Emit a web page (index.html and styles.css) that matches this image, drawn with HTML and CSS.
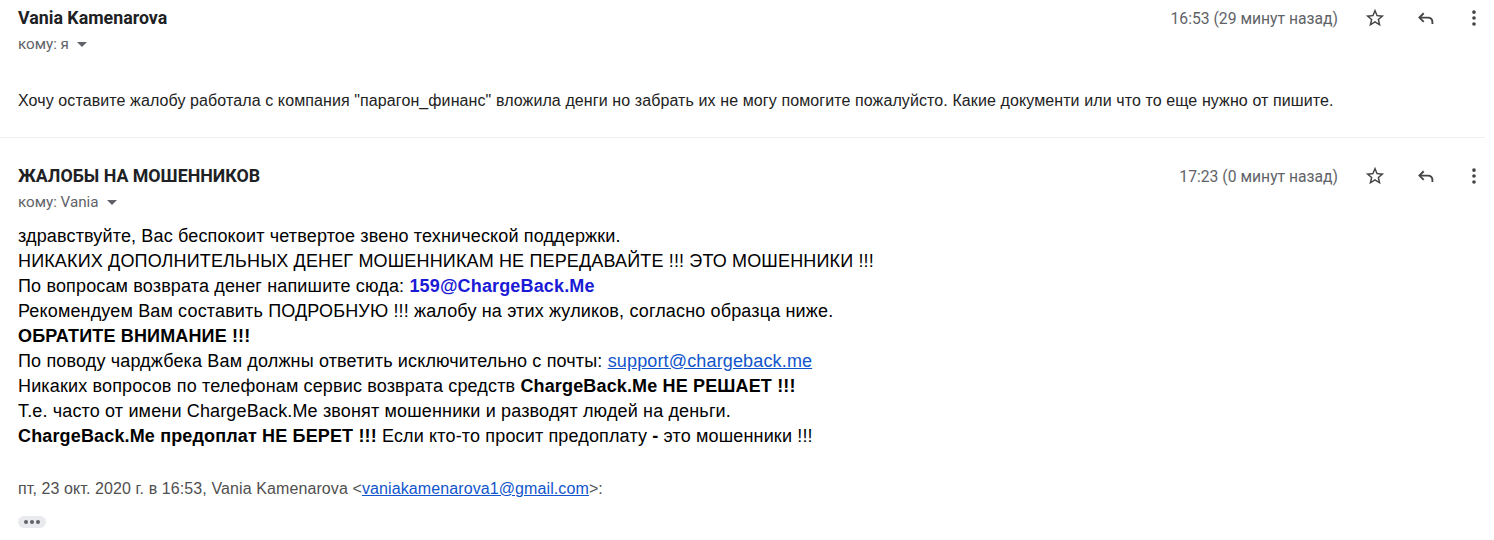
FILE: index.html
```html
<!DOCTYPE html>
<html lang="ru">
<head>
<meta charset="utf-8">
<link rel="stylesheet" href="styles.css">
</head>
<body>
<div class="thread">
  <div class="msg msg-first">
    <div class="head">
      <div class="who">
        <div class="name">Vania Kamenarova</div>
        <div class="to">кому: я <span class="caret"></span></div>
      </div>
      <div class="meta">
        <span class="time">16:53 (29 минут назад)</span>
        <span class="icon star"><svg viewBox="0 0 24 24" width="22" height="22"><path d="M22 9.24l-7.19-.62L12 2 9.19 8.63 2 9.24l5.46 4.73L5.82 21 12 17.27 18.18 21l-1.63-7.03L22 9.24zM12 15.4l-3.76 2.27 1-4.28-3.32-2.88 4.38-.38L12 6.1l1.71 4.04 4.38.38-3.32 2.88 1 4.28L12 15.4z" fill="#444"/></svg></span>
        <span class="icon reply"><svg viewBox="0 0 24 24" width="22" height="22"><path d="M9.5 6.8L4.8 11.5l4.7 4.7" fill="none" stroke="#444" stroke-width="2"/><path d="M5.5 11.5H14c3 0 5 2 5 5v2" fill="none" stroke="#444" stroke-width="2"/></svg></span>
        <span class="icon more"><svg viewBox="0 0 24 24" width="22" height="22"><circle cx="12" cy="5.5" r="2" fill="#444"/><circle cx="12" cy="12" r="2" fill="#444"/><circle cx="12" cy="18.5" r="2" fill="#444"/></svg></span>
      </div>
    </div>
    <div class="text-small">Хочу оставите жалобу работала с компания "парагон_финанс" вложила денги но забрать их не могу помогите пожалуйсто. Какие документи или что то еще нужно от пишите.</div>
  </div>

  <div class="msg msg-second">
    <div class="head">
      <div class="who">
        <div class="name">ЖАЛОБЫ НА МОШЕННИКОВ</div>
        <div class="to">кому: Vania <span class="caret"></span></div>
      </div>
      <div class="meta">
        <span class="time">17:23 (0 минут назад)</span>
        <span class="icon star"><svg viewBox="0 0 24 24" width="22" height="22"><path d="M22 9.24l-7.19-.62L12 2 9.19 8.63 2 9.24l5.46 4.73L5.82 21 12 17.27 18.18 21l-1.63-7.03L22 9.24zM12 15.4l-3.76 2.27 1-4.28-3.32-2.88 4.38-.38L12 6.1l1.71 4.04 4.38.38-3.32 2.88 1 4.28L12 15.4z" fill="#444"/></svg></span>
        <span class="icon reply"><svg viewBox="0 0 24 24" width="22" height="22"><path d="M9.5 6.8L4.8 11.5l4.7 4.7" fill="none" stroke="#444" stroke-width="2"/><path d="M5.5 11.5H14c3 0 5 2 5 5v2" fill="none" stroke="#444" stroke-width="2"/></svg></span>
        <span class="icon more"><svg viewBox="0 0 24 24" width="22" height="22"><circle cx="12" cy="5.5" r="2" fill="#444"/><circle cx="12" cy="12" r="2" fill="#444"/><circle cx="12" cy="18.5" r="2" fill="#444"/></svg></span>
      </div>
    </div>
    <div class="text-big">
      <div>здравствуйте, Вас беспокоит четвертое звено технической поддержки.</div>
      <div>НИКАКИХ ДОПОЛНИТЕЛЬНЫХ ДЕНЕГ МОШЕННИКАМ НЕ ПЕРЕДАВАЙТЕ !!! ЭТО МОШЕННИКИ !!!</div>
      <div>По вопросам возврата денег напишите сюда: <b class="blue">159@ChargeBack.Me</b></div>
      <div>Рекомендуем Вам составить ПОДРОБНУЮ !!! жалобу на этих жуликов, согласно образца ниже.</div>
      <div><b>ОБРАТИТЕ ВНИМАНИЕ !!!</b></div>
      <div>По поводу чарджбека Вам должны ответить исключительно с почты: <a class="link" href="#">support@chargeback.me</a></div>
      <div>Никаких вопросов по телефонам сервис возврата средств <b>ChargeBack.Me НЕ РЕШАЕТ !!!</b></div>
      <div>Т.е. часто от имени ChargeBack.Me звонят мошенники и разводят людей на деньги.</div>
      <div><b>ChargeBack.Me предоплат НЕ БЕРЕТ !!!</b> Если кто-то просит предоплату <b>-</b> это мошенники !!!</div>
    </div>
    <div class="quote-head">пт, 23 окт. 2020 г. в 16:53, Vania Kamenarova &lt;<a class="link" href="#">vaniakamenarova1@gmail.com</a>&gt;:</div>
    <div class="dots"><span></span><span></span><span></span></div>
  </div>
</div>
</body>
</html>
```

FILE: styles.css
```css
html, body {
  margin: 0;
  padding: 0;
  background: #fff;
}
body {
  font-family: Roboto, "Liberation Sans", Arial, sans-serif;
  color: #222;
}
.thread {
  width: 1485px;
}
.msg {
  padding: 0 0 0 18px;
}
.msg-first {
  padding-top: 8px;
  height: 138px;
  border-bottom: 1px solid #efefef;
  box-sizing: border-box;
}
.msg-second {
  padding-top: 28px;
}
.head {
  display: flex;
  justify-content: space-between;
  align-items: flex-start;
}
.name {
  font-weight: 700;
  font-size: 17.8px;
  line-height: 20px;
  color: #202124;
}
.to {
  font-size: 15.2px;
  line-height: 20px;
  color: #5f6368;
  margin-top: 6px;
  display: flex;
  align-items: center;
  gap: 6px;
}
.caret {
  display: inline-block;
  width: 0;
  height: 0;
  border-left: 5px solid transparent;
  border-right: 5px solid transparent;
  border-top: 5px solid #5f6368;
  margin-left: 2px;
}
.meta {
  display: flex;
  align-items: center;
  height: 20px;
}
.time {
  font-size: 15.7px;
  color: #5f6368;
  margin-right: 26px;
}
.icon {
  display: flex;
  width: 22px;
  height: 22px;
  align-items: center;
  justify-content: center;
}
.star { margin-right: 29px; }
.reply { margin-right: 26px; }
.more { margin-right: 0; }
.text-small {
  font-family: "Liberation Sans", Arial, sans-serif;
  font-size: 16px;
  letter-spacing: 0.1px;
  line-height: 20px;
  color: #222;
  margin-top: 37px;
}
.text-big {
  font-family: "Liberation Sans", Arial, sans-serif;
  font-size: 18px;
  letter-spacing: 0.15px;
  line-height: 25px;
  color: #000;
  margin-top: 12px;
}
.text-big b { font-weight: 700; }
.blue { color: #1a1ad6; }
.link { color: #1155cc; text-decoration: underline; }
.quote-head {
  font-family: "Liberation Sans", Arial, sans-serif;
  font-size: 16px;
  letter-spacing: 0.1px;
  line-height: 20px;
  color: #505050;
  margin-top: 30px;
}
.dots {
  margin-top: 17px;
  width: 28px;
  height: 12px;
  border-radius: 6px;
  background: #e8eaed;
  display: flex;
  align-items: center;
  justify-content: center;
  gap: 2px;
}
.dots span {
  width: 4px;
  height: 4px;
  border-radius: 50%;
  background: #5f6368;
}
```
